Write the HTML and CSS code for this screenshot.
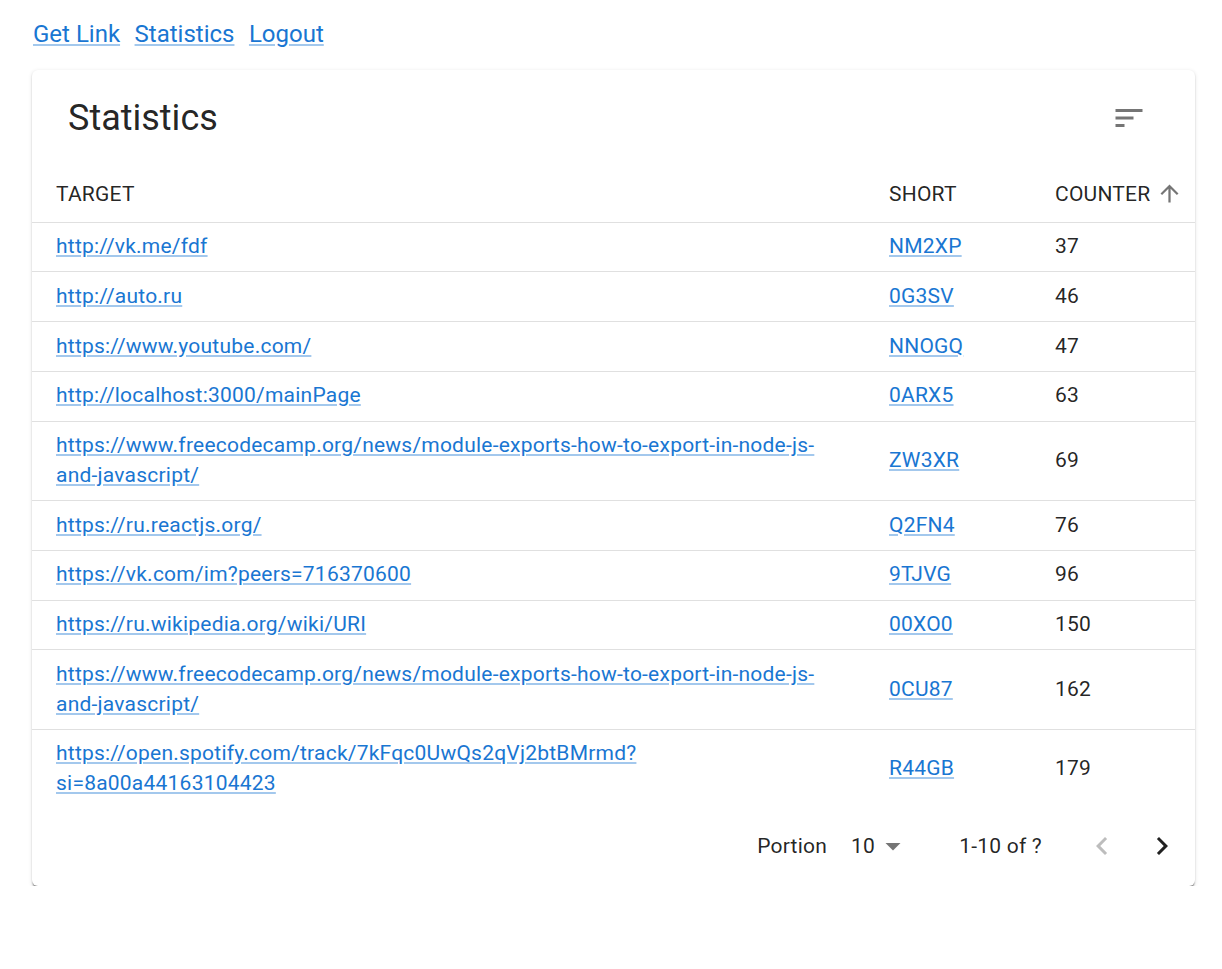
FILE: index.html
```html
<!DOCTYPE html>
<html lang="en">
<head>
<meta charset="utf-8">
<title>Statistics</title>
<link rel="stylesheet" href="styles.css">
</head>
<body>
<nav class="nav">
  <a class="link" href="#">Get Link</a>
  <a class="link" href="#">Statistics</a>
  <a class="link" href="#">Logout</a>
</nav>
<section class="card">
  <div class="toolbar">
    <h1 class="title">Statistics</h1>
    <button class="icon-btn" aria-label="sort">
      <svg viewBox="0 0 24 24" width="36" height="36"><path d="M3 18h6v-2H3v2zM3 6v2h18V6H3zm0 7h12v-2H3v2z"/></svg>
    </button>
  </div>
  <table class="table">
    <colgroup><col class="c1"><col class="c2"><col class="c3"></colgroup>
    <thead>
      <tr>
        <th>TARGET</th>
        <th>SHORT</th>
        <th><span class="sort">COUNTER<svg class="sort-icon" viewBox="0 0 24 24" width="27" height="27"><path d="M4 12l1.41 1.41L11 7.83V20h2V7.83l5.58 5.59L20 12l-8-8-8 8z"/></svg></span></th>
      </tr>
    </thead>
    <tbody>
      <tr><td><a class="link" href="#">http://vk.me/fdf</a></td><td><a class="link" href="#">NM2XP</a></td><td>37</td></tr>
      <tr><td><a class="link" href="#">http://auto.ru</a></td><td><a class="link" href="#">0G3SV</a></td><td>46</td></tr>
      <tr><td><a class="link" href="#">https://www.youtube.com/</a></td><td><a class="link" href="#">NNOGQ</a></td><td>47</td></tr>
      <tr><td><a class="link" href="#">http://localhost:3000/mainPage</a></td><td><a class="link" href="#">0ARX5</a></td><td>63</td></tr>
      <tr><td><a class="link" href="#">https://www.freecodecamp.org/news/module-exports-how-to-export-in-node-js-and-javascript/</a></td><td><a class="link" href="#">ZW3XR</a></td><td>69</td></tr>
      <tr><td><a class="link" href="#">https://ru.reactjs.org/</a></td><td><a class="link" href="#">Q2FN4</a></td><td>76</td></tr>
      <tr><td><a class="link" href="#">https://vk.com/im?peers=716370600</a></td><td><a class="link" href="#">9TJVG</a></td><td>96</td></tr>
      <tr><td><a class="link" href="#">https://ru.wikipedia.org/wiki/URI</a></td><td><a class="link" href="#">00XO0</a></td><td>150</td></tr>
      <tr><td><a class="link" href="#">https://www.freecodecamp.org/news/module-exports-how-to-export-in-node-js-and-javascript/</a></td><td><a class="link" href="#">0CU87</a></td><td>162</td></tr>
      <tr><td><a class="link" href="#">https://open.spotify.com/track/7kFqc0UwQs2qVj2btBMrmd?si=8a00a44163104423</a></td><td><a class="link" href="#">R44GB</a></td><td>179</td></tr>
    </tbody>
  </table>
  <div class="pagination">
    <span class="pg-label">Portion</span>
    <span class="pg-select">10<svg viewBox="0 0 24 24" width="36" height="36"><path d="M7 10l5 5 5-5z"/></svg></span>
    <span class="pg-rows">1-10 of ?</span>
    <div class="pg-actions">
      <button class="icon-btn disabled" aria-label="previous">
        <svg viewBox="0 0 24 24" width="36" height="36"><path d="M15.41 16.59L10.83 12l4.58-4.59L14 6l-6 6 6 6 1.41-1.41z"/></svg>
      </button>
      <button class="icon-btn active" aria-label="next">
        <svg viewBox="0 0 24 24" width="36" height="36"><path d="M8.59 16.59L13.17 12 8.59 7.41 10 6l6 6-6 6-1.41-1.41z"/></svg>
      </button>
    </div>
  </div>
</section>
</body>
</html>
```

FILE: styles.css
```css
* { box-sizing: border-box; }

body {
  margin: 0;
  background: #fff;
  font-family: Roboto, "Liberation Sans", Arial, sans-serif;
  color: rgba(0, 0, 0, 0.87);
}

.link {
  color: #1976d2;
  text-decoration: underline;
  text-decoration-color: rgba(25, 118, 210, 0.4);
}

.nav {
  display: flex;
  gap: 14.5px;
  padding: 16px 0 0 33px;
  height: 70px;
  font-size: 24px;
  line-height: 36px;
}

.card {
  margin-left: 32px;
  width: 1163px;
  background: #fff;
  border-radius: 6px;
  box-shadow: 0 3px 1.5px -1.5px rgba(0,0,0,0.3), 0 1.5px 1.5px 0 rgba(0,0,0,0.14), 0 1.5px 4.5px 0 rgba(0,0,0,0.12);
}

.toolbar {
  display: flex;
  align-items: center;
  justify-content: space-between;
  height: 96px;
  padding: 2px 36px 0;
}

.title {
  margin: 0;
  font-size: 36px;
  font-weight: 400;
  line-height: 1.2;
}

.icon-btn {
  display: flex;
  align-items: center;
  justify-content: center;
  width: 60px;
  height: 60px;
  padding: 0;
  border: 0;
  background: none;
  fill: rgba(0, 0, 0, 0.54);
}

.icon-btn.active { fill: rgba(0, 0, 0, 0.87); }
.icon-btn.disabled { fill: rgba(0, 0, 0, 0.26); }

.toolbar .icon-btn { margin-top: -2px; }

.table {
  width: 100%;
  border-collapse: collapse;
  table-layout: fixed;
  font-size: 21px;
  letter-spacing: 0.01071em;
}

.c1 { width: 833px; }
.c2 { width: 166px; }
.c3 { width: 164px; }

.table th {
  height: 56px;
  padding: 0 24px;
  text-align: left;
  font-weight: 400;
  line-height: 30px;
  border-bottom: 1px solid #e0e0e0;
  vertical-align: middle;
}

.table td {
  padding: 9.5px 24px;
  line-height: 29.75px;
  border-bottom: 1px solid #e0e0e0;
  vertical-align: middle;
}

.table tbody tr:last-child td { border-bottom: 0; }

.sort {
  display: inline-flex;
  align-items: center;
}

.sort-icon {
  margin-left: 6px;
  fill: rgba(0, 0, 0, 0.54);
}

.pagination {
  display: flex;
  align-items: center;
  justify-content: flex-end;
  height: 78px;
  padding: 0 3px 3px 0;
  font-size: 21px;
  letter-spacing: 0.01071em;
}

.pg-select {
  display: flex;
  align-items: center;
  margin-left: 24px;
  margin-right: 48px;
}

.pg-select svg { fill: rgba(0, 0, 0, 0.54); }

.pg-actions {
  display: flex;
  margin-left: 30px;
}
```
